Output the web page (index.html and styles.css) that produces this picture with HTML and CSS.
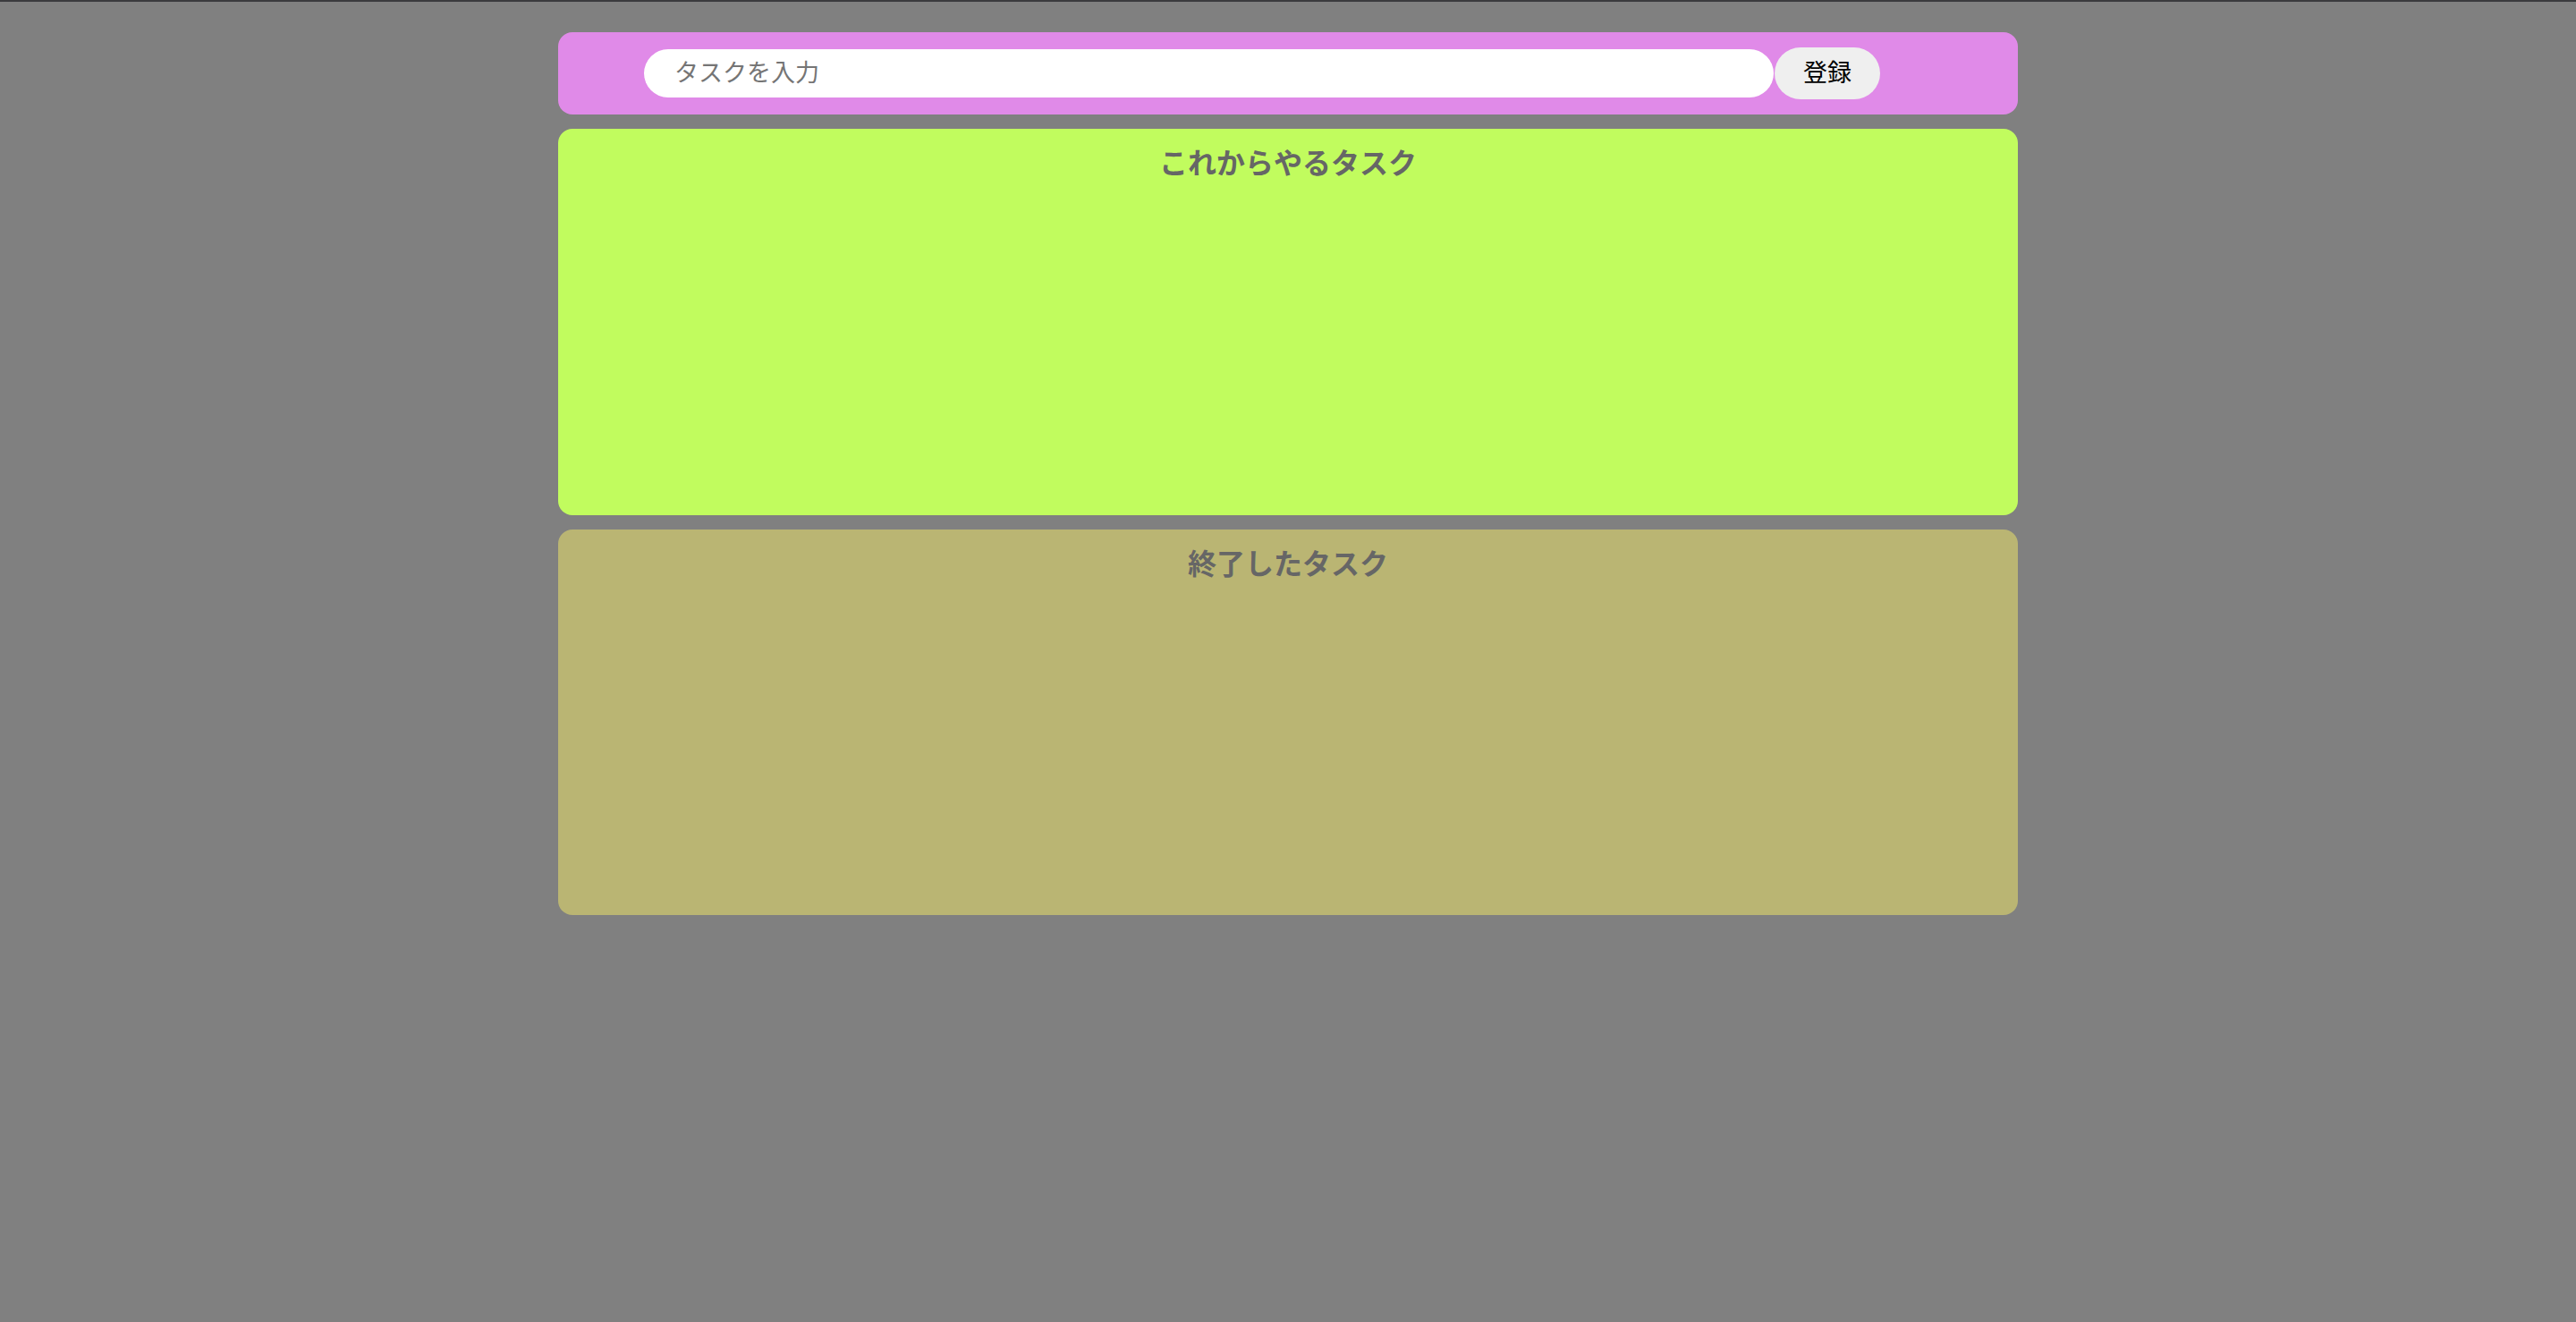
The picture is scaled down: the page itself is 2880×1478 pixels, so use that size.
FILE: index.html
```html
<!DOCTYPE html>
<html lang="ja">
<head>
<meta charset="utf-8">
<title>TODO</title>
<link rel="stylesheet" href="styles.css">
</head>
<body>
<div class="page">
  <div class="input-area">
    <input class="task-input" type="text" placeholder="タスクを入力">
    <button class="add-button">登録</button>
  </div>
  <div class="incomplete-area">
    <p class="title">これからやるタスク</p>
  </div>
  <div class="complete-area">
    <p class="title">終了したタスク</p>
  </div>
</div>
</body>
</html>
```
FILE: styles.css
```css
html, body {
  margin: 0;
  padding: 0;
}
body {
  background: #808080;
  border-top: 2px solid #3b3b3e;
  min-height: 1476px;
  font-family: "Noto Sans CJK JP", "Noto Sans", sans-serif;
}
.page {
  width: 1632px;
  margin: 0 auto;
  padding-top: 34px;
  display: flex;
  flex-direction: column;
  gap: 16px;
}
.input-area {
  background: #e08ae8;
  height: 92px;
  border-radius: 16px;
  display: flex;
  align-items: center;
  padding-left: 96px;
  box-sizing: border-box;
}
.task-input {
  width: 1263px;
  height: 54px;
  box-sizing: border-box;
  border: none;
  outline: none;
  border-radius: 27px;
  padding: 0 0 5px 34px;
  font-family: "Noto Sans CJK JP", sans-serif;
  font-size: 27px;
  background: #fff;
  color: #000;
}
.task-input::placeholder {
  color: #757575;
}
.add-button {
  width: 118px;
  height: 58px;
  box-sizing: border-box;
  border: none;
  border-radius: 29px;
  background: #efefef;
  color: #000;
  font-family: "Noto Sans CJK JP", sans-serif;
  font-size: 27px;
  padding: 0 0 5px 0;
  margin-left: 1px;
}
.incomplete-area, .complete-area {
  height: 432px;
  border-radius: 16px;
  box-sizing: border-box;
}
.incomplete-area {
  background: #c1fc5e;
}
.complete-area {
  background: #bab573;
  height: 431px;
}
.title {
  margin: 0;
  padding-top: 13px;
  text-align: center;
  font-weight: bold;
  font-size: 32px;
  line-height: 46px;
  color: #666;
}
```
